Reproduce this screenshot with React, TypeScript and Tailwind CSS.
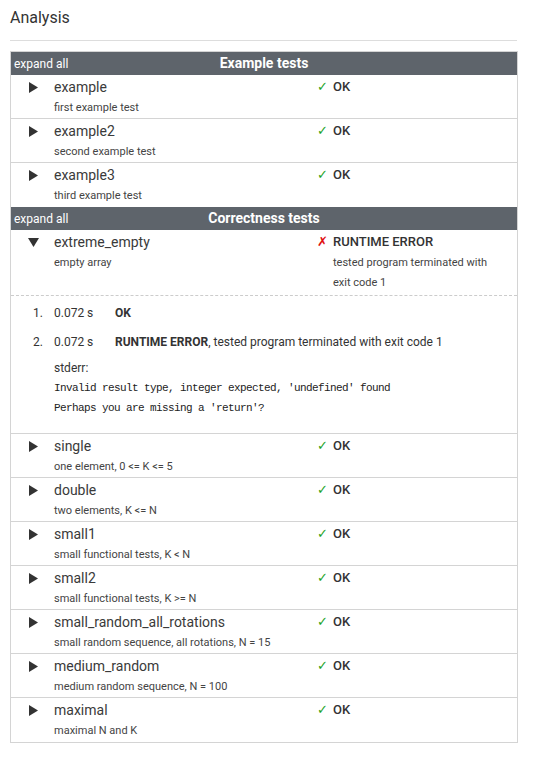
import React from 'react';

type Test = { name: string; desc: string; ok: boolean; msg?: string[] };

const exampleTests: Test[] = [
  { name: 'example', desc: 'first example test', ok: true },
  { name: 'example2', desc: 'second example test', ok: true },
  { name: 'example3', desc: 'third example test', ok: true },
];

const correctnessTests: Test[] = [
  { name: 'single', desc: 'one element, 0 <= K <= 5', ok: true },
  { name: 'double', desc: 'two elements, K <= N', ok: true },
  { name: 'small1', desc: 'small functional tests, K < N', ok: true },
  { name: 'small2', desc: 'small functional tests, K >= N', ok: true },
  { name: 'small_random_all_rotations', desc: 'small random sequence, all rotations, N = 15', ok: true },
  { name: 'medium_random', desc: 'medium random sequence, N = 100', ok: true },
  { name: 'maximal', desc: 'maximal N and K', ok: true },
];

function Arrow({ down }: { down?: boolean }) {
  return (
    <svg width="11" height="11" viewBox="0 0 11 11" className="mt-[6px]">
      {down ? <polygon points="0,1 11,1 5.5,10" fill="#333" /> : <polygon points="1,0 10,5.5 1,11" fill="#333" />}
    </svg>
  );
}

function GroupHeader({ title }: { title: string }) {
  return (
    <div className="relative h-[23px] bg-[#5e646b] flex items-center justify-center">
      <span className="absolute left-[3px] top-[4px] text-[12px] leading-[16px] text-white">expand all</span>
      <span className="text-[14px] font-bold text-white">{title}</span>
    </div>
  );
}

function Row({ t, open, last }: { t: Test; open?: boolean; last?: boolean }) {
  return (
    <div className={`flex h-full ${open ? 'border-b border-dashed border-[#ccc]' : last ? '' : 'border-b border-[#d4d4d4]'}`}>
      <div className="w-[43px] flex justify-end pr-[15px] pt-[1px]">
        <Arrow down={open} />
      </div>
      <div className="w-[263px] pt-[1px]">
        <div className="text-[14px] leading-[22px] text-[#3a3a3a]">{t.name}</div>
        <div className="text-[11px] leading-[20px] text-[#444] pb-[1px]">{t.desc}</div>
      </div>
      <div className="flex-1 pt-[1px]">
        <div className="flex items-center text-[13px] leading-[22px] font-medium text-[#333]">
          {t.ok ? (
            <span className="w-[16px] text-[#1fa31f] text-[13px] font-normal">✓</span>
          ) : (
            <span className="w-[16px] text-[#e01010] text-[13px] font-normal">✗</span>
          )}
          <span>{t.ok ? 'OK' : 'RUNTIME ERROR'}</span>
        </div>
        {t.msg && (
          <div className="pl-[16px] text-[11px] leading-[20px] text-[#444] pb-[2px]">
            {t.msg.map((m) => (
              <div key={m}>{m}</div>
            ))}
          </div>
        )}
      </div>
    </div>
  );
}

export default function App() {
  const font = { fontFamily: 'Roboto, "Noto Sans", sans-serif' };
  return (
    <div className="bg-white min-h-screen px-[10px] pt-[6px]" style={font}>
      <h2 className="text-[16px] leading-[24px] text-[#333]">Analysis</h2>
      <div className="mt-[10px] border-t border-[#ddd] w-[507px]" />
      <div className="mt-[10px] w-[508px] border border-[#d4d4d4]">
        <GroupHeader title="Example tests" />
        {exampleTests.map((t, i) => (
          <div key={t.name} className="h-[44px]">
            <Row t={t} last={i === exampleTests.length - 1} />
          </div>
        ))}
        <GroupHeader title="Correctness tests" />
        <div>
          <Row
            t={{ name: 'extreme_empty', desc: 'empty array', ok: false, msg: ['tested program terminated with', 'exit code 1'] }}
            open
          />
        </div>
        <div className="border-b border-[#d4d4d4] pt-[7px] pb-[15px]">
          <div className="flex text-[12px] leading-[20px] text-[#333] h-[29px]">
            <span className="w-[43px] text-right pr-[11px]">1.</span>
            <span className="w-[61px]">0.072 s</span>
            <span className="font-bold">OK</span>
          </div>
          <div className="flex text-[12px] leading-[20px] text-[#333] h-[26px]">
            <span className="w-[43px] text-right pr-[11px]">2.</span>
            <span className="w-[61px]">0.072 s</span>
            <span>
              <span className="font-bold">RUNTIME ERROR</span>, tested program terminated with exit code 1
            </span>
          </div>
          <div className="pl-[43px] text-[12px] leading-[20px] text-[#333]">
            <div>stderr:</div>
            <div
              className="text-[11px] leading-[20px] tracking-[-0.6px] text-[#222] whitespace-pre"
              style={{ fontFamily: '"Liberation Mono", "DejaVu Sans Mono", monospace' }}
            >
              {"Invalid result type, integer expected, 'undefined' found\nPerhaps you are missing a 'return'?"}
            </div>
          </div>
        </div>
        {correctnessTests.map((t, i) => (
          <div key={t.name} className="h-[44px]">
            <Row t={t} last={i === correctnessTests.length - 1} />
          </div>
        ))}
      </div>
    </div>
  );
}
